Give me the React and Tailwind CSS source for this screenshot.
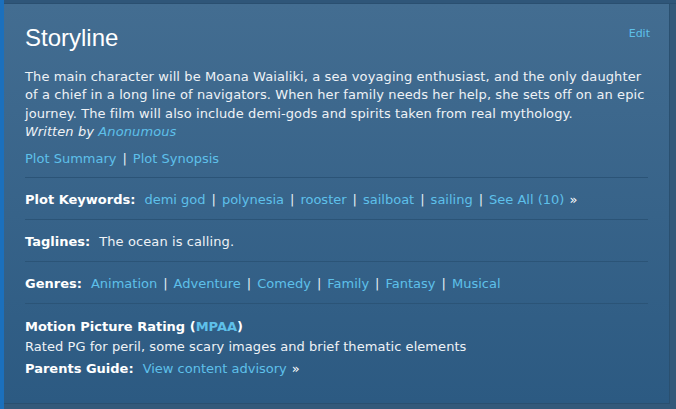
import React from "react";

const Sep = () => <span className="text-[#e6edf3] mx-[6px]">|</span>;
const L = ({ children, className = "" }) => (
  <a className={"text-[#5ec0ea] " + className}>{children}</a>
);

function LinkList({ items }) {
  return items.map((t, i) => (
    <React.Fragment key={t}>
      {i > 0 && <Sep />}
      <L>{t}</L>
    </React.Fragment>
  ));
}

export default function App() {
  return (
    <div
      className="w-[676px] h-[409px] flex overflow-hidden bg-[#2e5a80]"
      style={{ fontFamily: '"DejaVu Sans", Verdana, sans-serif' }}
    >
      <div className="w-[4px] shrink-0 bg-[#1b70bd]" />
      <div className="flex-1 flex flex-col">
        <div className="h-[4px] bg-[#2f5679] border-b border-[#2a4f70]" />
        <div className="flex-1 flex">
          <div className="flex-1 flex flex-col bg-gradient-to-b from-[#436d91] to-[#2c5a82] border-r border-[#2a5070] border-b">
            <div className="pl-[21px] pr-[21px] text-[13px] text-[#eef2f6] leading-[18px]">
              <div className="flex items-start justify-between pt-[19px]">
                <h2
                  className="text-[24px] leading-[30px] text-white"
                  style={{ fontFamily: '"Liberation Sans", Arial, sans-serif' }}
                >
                  Storyline
                </h2>
                <a className="text-[11px] text-[#5ec0ea] mt-[2px] mr-[-2px]">Edit</a>
              </div>
              <p className="mt-[15px] leading-[18.3px] tracking-[0.1px]">
                The main character will be Moana Waialiki, a sea voyaging enthusiast, and the only daughter
                <br />
                of a chief in a long line of navigators. When her family needs her help, she sets off on an epic
                <br />
                journey. The film will also include demi-gods and spirits taken from real mythology.
                <br />
                <em>
                  Written by <L>Anonumous</L>
                </em>
              </p>
              <div className="mt-[9px] pb-[9px]">
                <L>Plot Summary</L>
                <Sep />
                <L>Plot Synopsis</L>
              </div>
              <div className="border-t border-[#2b5477] pt-[13px] pb-[10px]">
                <span className="font-bold text-white">Plot Keywords:</span>
                <span className="ml-[9px]">
                  <LinkList items={["demi god", "polynesia", "rooster", "sailboat", "sailing", "See All (10)"]} />
                </span>
                <span className="ml-[5px] text-white">»</span>
              </div>
              <div className="border-t border-[#2b5477] pt-[13px] pb-[10px]">
                <span className="font-bold text-white">Taglines:</span>
                <span className="ml-[9px] tracking-[0.1px]">The ocean is calling.</span>
              </div>
              <div className="border-t border-[#2b5477] pt-[13px] pb-[10px]">
                <span className="font-bold text-white">Genres:</span>
                <span className="ml-[9px]">
                  <LinkList items={["Animation", "Adventure", "Comedy", "Family", "Fantasy", "Musical"]} />
                </span>
              </div>
              <div className="border-t border-[#2b5477] pt-[14px]">
                <div className="font-bold text-white leading-[18px]">
                  Motion Picture Rating (<span className="text-[#5ec0ea]">MPAA</span>)
                </div>
                <div className="mt-[2px] tracking-[0.05px]">Rated PG for peril, some scary images and brief thematic elements</div>
                <div className="mt-[4px]">
                  <span className="font-bold text-white">Parents Guide:</span>
                  <span className="ml-[9px]">
                    <L>View content advisory</L>
                  </span>
                  <span className="ml-[5px] text-white">»</span>
                </div>
              </div>
            </div>
          </div>
          <div className="w-[6px] shrink-0 bg-[#33597a]" />
        </div>
        <div className="h-[5px] bg-[#33597a]" />
      </div>
    </div>
  );
}
